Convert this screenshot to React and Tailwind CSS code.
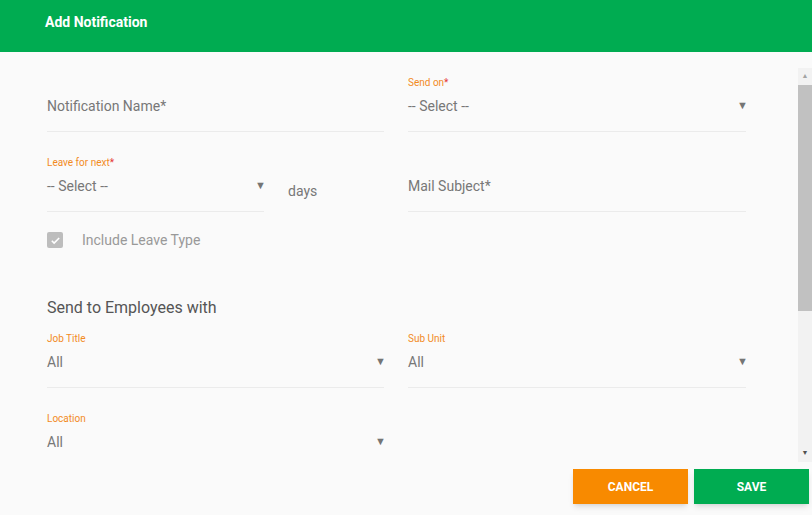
const Field = ({ label, value, select, w = "w-[337px]" }) => (
  <div className={`${w} h-[60px] flex flex-col`}>
    <div className="h-[20px] flex items-center text-[10px] text-[#f28b1e]">
      {label && <>{label}</>}
    </div>
    <div className="h-[40px] pb-[10px] flex items-center justify-between border-b border-[#ebebeb] text-[14px] text-[#777]">
      <span>{value}</span>
      {select && <span className="text-[11px] text-[#757575] mr-[-2px]">▼</span>}
    </div>
  </div>
);

export default function App() {
  return (
    <div className="w-[812px] h-[515px] bg-[#fafafa] flex flex-col overflow-hidden" style={{ fontFamily: "Roboto, 'Liberation Sans', sans-serif" }}>
      <div className="h-[52px] bg-[#00ac51] flex items-center pl-[45px] pb-[8px] text-white font-bold text-[14px] shrink-0">Add Notification</div>
      <div className="h-[410px] flex overflow-hidden shrink-0">
        <div className="flex-1 pl-[47px] pt-[20px] flex flex-col">
          <div className="flex gap-[24px]">
            <Field value="Notification Name*" />
            <Field label={<>Send on<span className="text-[#e53935]">*</span></>} value="-- Select --" select w="w-[338px]" />
          </div>
          <div className="flex gap-[24px] mt-[20px]">
            <div className="w-[337px] flex">
              <Field label={<>Leave for next<span className="text-[#e53935]">*</span></>} value="-- Select --" select w="w-[217px]" />
              <div className="ml-[24px] h-[50px] flex items-end text-[14px] text-[#777]">days</div>
            </div>
            <Field value="Mail Subject*" w="w-[338px]" />
          </div>
          <div className="mt-[20px] h-[16px] flex items-center gap-[19px]">
            <div className="w-[16px] h-[16px] rounded-[2px] bg-[#bdbdbd] flex items-center justify-center">
              <svg width="11" height="11" viewBox="0 0 24 24"><path d="M4 12.5l5 5L20 6.5" fill="none" stroke="white" strokeWidth="3.5" /></svg>
            </div>
            <span className="text-[14px] text-[#999]">Include Leave Type</span>
          </div>
          <div className="mt-[50px] h-[20px] flex items-center text-[16px] text-[#555]">Send to Employees with</div>
          <div className="flex gap-[24px] mt-[10px]">
            <Field label="Job Title" value="All" select />
            <Field label="Sub Unit" value="All" select w="w-[338px]" />
          </div>
          <div className="flex gap-[24px] mt-[20px]">
            <Field label="Location" value="All" select />
          </div>
        </div>
        <div className="w-[14px] mt-[16px] h-[394px] bg-[#f2f2f2] flex flex-col items-center shrink-0 ml-[52px]">
          <div className="h-[17px] flex items-center text-[7px] text-[#a3a3a3]">▲</div>
          <div className="w-full h-[226px] bg-[#c1c1c1]" />
          <div className="flex-1" />
          <div className="h-[17px] flex items-center text-[7px] text-[#505050]">▼</div>
        </div>
      </div>
      <div className="flex justify-end gap-[6px] pr-[3px] pt-[7px]">
        <button className="w-[115px] h-[35px] bg-[#f88a00] text-white text-[12px] font-bold shadow-md">CANCEL</button>
        <button className="w-[115px] h-[35px] bg-[#00ac51] text-white text-[12px] font-bold shadow-md">SAVE</button>
      </div>
    </div>
  );
}
